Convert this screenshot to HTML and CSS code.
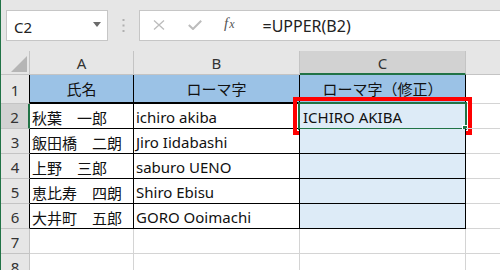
FILE: index.html
```html
<!DOCTYPE html>
<html lang="ja">
<head>
<meta charset="utf-8">
<link rel="stylesheet" href="styles.css">
</head>
<body>
<div class="app">
  <div class="fbar">
    <div class="namebox">
      <span class="ref">C2</span>
      <svg class="drop" width="8" height="5" viewBox="0 0 8 5"><path d="M0 0 H8 L4 5 Z" fill="#6a6a6a"/></svg>
    </div>
    <svg class="dots" width="3" height="13" viewBox="0 0 3 13"><rect x="0.5" y="0" width="2" height="2" fill="#b0b0b0"/><rect x="0.5" y="5.5" width="2" height="2" fill="#b0b0b0"/><rect x="0.5" y="11" width="2" height="2" fill="#b0b0b0"/></svg>
    <div class="formula">
      <svg class="ic" width="12" height="10" viewBox="0 0 12 10"><path d="M1 0.5 L11 9.5 M11 0.5 L1 9.5" stroke="#bcbcbc" stroke-width="1.3" fill="none"/></svg>
      <svg class="ic ok" width="14" height="10" viewBox="0 0 14 10"><path d="M0.8 5 L5 9 L13.2 0.8" stroke="#bcbcbc" stroke-width="2" fill="none"/></svg>
      <span class="fx"><i>f</i><i class="x">x</i></span>
      <span class="ftext">=UPPER(B2)</span>
    </div>
  </div>
  <div class="sheet">
    <div class="h corner"><svg width="16" height="16" viewBox="0 0 16 16"><path d="M16 0 V16 H0 Z" fill="#b5b5b5"/></svg></div>
    <div class="h">A</div>
    <div class="h">B</div>
    <div class="h sel-col">C</div>
    <div class="h">D</div>

    <div class="rh bk">1</div>
    <div class="c hdr bk b2">氏名</div>
    <div class="c hdr bk b2">ローマ字</div>
    <div class="c hdr bk b2">ローマ字（修正）</div>
    <div class="c"></div>

    <div class="rh sel-row">2</div>
    <div class="c bk">秋葉　一郎</div>
    <div class="c bk">ichiro akiba</div>
    <div class="c bk fill active">ICHIRO AKIBA<span class="selbox"></span><span class="handle"></span><span class="mark"></span></div>
    <div class="c"></div>

    <div class="rh bk">3</div>
    <div class="c bk">飯田橋　二朗</div>
    <div class="c bk">Jiro Iidabashi</div>
    <div class="c bk fill"></div>
    <div class="c"></div>

    <div class="rh bk">4</div>
    <div class="c bk">上野　三郎</div>
    <div class="c bk">saburo UENO</div>
    <div class="c bk fill"></div>
    <div class="c"></div>

    <div class="rh bk">5</div>
    <div class="c bk">恵比寿　四朗</div>
    <div class="c bk">Shiro Ebisu</div>
    <div class="c bk fill"></div>
    <div class="c"></div>

    <div class="rh bk">6</div>
    <div class="c bk">大井町　五郎</div>
    <div class="c bk">GORO Ooimachi</div>
    <div class="c bk fill"></div>
    <div class="c"></div>

    <div class="rh">7</div>
    <div class="c"></div>
    <div class="c"></div>
    <div class="c"></div>
    <div class="c"></div>

    <div class="rh">8</div>
    <div class="c"></div>
    <div class="c"></div>
    <div class="c"></div>
    <div class="c"></div>
  </div>
</div>
</body>
</html>
```
FILE: styles.css
```css
* { box-sizing: border-box; }
html, body { margin: 0; padding: 0; }
body {
  width: 500px;
  height: 270px;
  overflow: hidden;
  background: #ffffff;
  font-family: "Noto Sans", "Noto Sans CJK JP", sans-serif;
}
.app {
  width: 500px;
  height: 270px;
  overflow: hidden;
  border-left: 1px solid #217346;
  background: #e6e6e6;
}
.fbar {
  height: 51px;
  display: flex;
  align-items: flex-start;
  padding-top: 10px;
  padding-left: 5px;
}
.namebox {
  width: 102px;
  height: 31px;
  background: #fff;
  border: 1px solid #c6c6c6;
  display: flex;
  align-items: center;
  justify-content: space-between;
  padding: 0 6px 0 7px;
}
.ref {
  font-size: 15px;
  color: #222;
  padding-top: 2px;
}
.drop { margin-top: -3px; }
.dots {
  margin: 9px 14px 0 14px;
}
.formula {
  flex: 1;
  height: 31px;
  margin-left: 0;
  margin-right: -10px;
  background: #fff;
  border: 1px solid #c6c6c6;
  display: flex;
  align-items: center;
  padding-left: 13px;
}
.ic { margin-right: 23px; margin-top: -1px; }
.ok { margin-right: 22px; }
.fx {
  font-family: "Liberation Serif", serif;
  font-style: italic;
  font-size: 15px;
  color: #555;
  margin-top: -4px;
  letter-spacing: 0;
}
.fx i { font-style: italic; }
.fx .x { font-size: 12px; margin-left: 1px; }
.ftext {
  margin-left: 28px;
  font-size: 16px;
  color: #222;
  padding-top: 1px;
}
.sheet {
  display: grid;
  grid-template-columns: 29px 104px 166px 166px 120px;
  grid-template-rows: 24px 29px repeat(7, 25px);
  width: 585px;
  background: #fff;
}
.h {
  background: #e6e6e6;
  border-right: 1px solid #c4c4c4;
  border-bottom: 1px solid #c4c4c4;
  display: flex;
  align-items: center;
  justify-content: center;
  font-size: 15px;
  color: #333;
  padding-top: 1px;
}
.corner {
  justify-content: flex-end;
  align-items: flex-end;
  padding: 0 2px 2px 0;
}
.corner svg { display: block; }
.sel-col {
  background: #d2d2d2;
  border-bottom: 2px solid #217346;
}
.rh {
  background: #e6e6e6;
  border-right: 1px solid #c4c4c4;
  border-bottom: 1px solid #c4c4c4;
  display: flex;
  align-items: center;
  justify-content: center;
  font-size: 15px;
  color: #333;
  padding-top: 2px;
}
.rh.bk { border-right-color: #000; }
.sel-row {
  background: #d2d2d2;
  border-right: 2px solid #217346;
}
.c {
  border-right: 1px solid #d4d4d4;
  border-bottom: 1px solid #d4d4d4;
  font-size: 15px;
  color: #111;
  display: flex;
  align-items: center;
  padding: 2px 0 0 2px;
  white-space: nowrap;
  position: relative;
}
.c.bk {
  border-right-color: #000;
  border-bottom-color: #000;
}
.c.b2 { border-bottom-width: 2px; }
.hdr {
  background: #9bc2e6;
  justify-content: center;
  padding: 0;
}
.fill { background: #ddebf7; }
.active { padding-left: 3px; }
.selbox {
  position: absolute;
  left: -2px;
  top: -2px;
  right: -2px;
  bottom: -2px;
  border: 2px solid #217346;
}
.handle {
  position: absolute;
  right: -3px;
  bottom: -3px;
  width: 6px;
  height: 6px;
  background: #217346;
  border: 1px solid #fff;
}
.mark {
  position: absolute;
  left: -7px;
  top: -7px;
  right: -7px;
  bottom: -7px;
  border: 4px solid #ff0000;
}
```
